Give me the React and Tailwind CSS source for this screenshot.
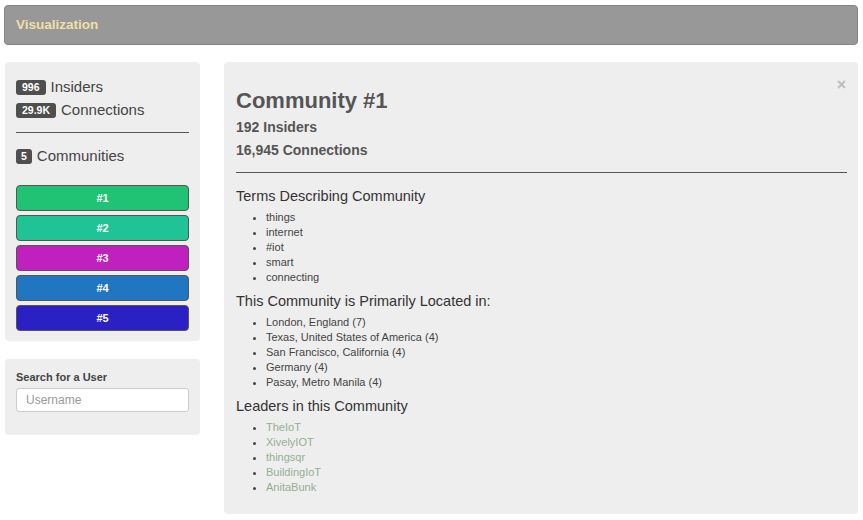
import React from "react";

const communities = [
  { label: "#1", color: "bg-[#20c374]" },
  { label: "#2", color: "bg-[#20c396]" },
  { label: "#3", color: "bg-[#c020be]" },
  { label: "#4", color: "bg-[#2176c2]" },
  { label: "#5", color: "bg-[#2a20c3]" },
];

const terms = ["things", "internet", "#iot", "smart", "connecting"];
const places = [
  "London, England (7)",
  "Texas, United States of America (4)",
  "San Francisco, California (4)",
  "Germany (4)",
  "Pasay, Metro Manila (4)",
];
const leaders = ["TheIoT", "XivelyIOT", "thingsqr", "BuildingIoT", "AnitaBunk"];

const Badge = ({ children, className = "" }) => (
  <span
    className={`inline-flex items-center h-[15px] rounded-[3px] bg-[#4f4f4f] text-white text-[10.5px] font-bold leading-none ${className}`}
  >
    {children}
  </span>
);

const App = () => {
  return (
    <div className="w-[863px] h-[520px] overflow-hidden bg-white font-['Liberation_Sans',Arial,sans-serif] text-[#555]">
      {/* Navbar */}
      <div className="ml-[4px] mt-[5px] w-[854px] h-[40px] flex items-center px-[11px] bg-[#989898] border border-[#858585] rounded-[4px]">
        <span className="text-[13.5px] font-bold text-[#f1dfa6]">Visualization</span>
      </div>

      <div className="flex ml-[5px] mt-[17px] gap-[24px]">
        {/* Sidebar */}
        <div className="w-[195px] flex flex-col gap-[18px]">
          <div className="bg-[#eeeeee] rounded-[4px] px-[11px] pt-[14px] pb-[10px]">
            <div className="flex items-center h-[23px] gap-[5px]">
              <Badge className="px-[6px]">996</Badge>
              <span className="text-[15px] text-[#444]">Insiders</span>
            </div>
            <div className="flex items-center h-[23px] gap-[5px]">
              <Badge className="px-[6px]">29.9K</Badge>
              <span className="text-[15px] text-[#444]">Connections</span>
            </div>
            <div className="mt-[10px] h-px bg-[#555]" />
            <div className="flex items-center h-[23px] gap-[5px] mt-[12px]">
              <Badge className="px-[5px]">5</Badge>
              <span className="text-[15px] text-[#444]">Communities</span>
            </div>
            <div className="mt-[17px] flex flex-col gap-[4px]">
              {communities.map((c) => (
                <button
                  key={c.label}
                  className={`h-[26px] w-full rounded-[4px] border border-[#555] ${c.color} text-white text-[11px] font-bold`}
                >
                  {c.label}
                </button>
              ))}
            </div>
          </div>

          <div className="bg-[#eeeeee] rounded-[4px] px-[11px] pt-[11px] pb-[23px]">
            <div className="text-[11px] leading-[15px] font-bold text-[#444] mb-[2px]">
              Search for a User
            </div>
            <input
              type="text"
              placeholder="Username"
              className="w-full h-[24px] bg-white border border-[#cccccc] rounded-[3px] px-[9px] text-[12px] placeholder:text-[#999] outline-none"
            />
          </div>
        </div>

        {/* Main panel */}
        <div className="relative w-[634px] h-[452px] bg-[#eeeeee] rounded-[4px] pl-[12px] pr-[11px] pt-[23px]">
          <span className="absolute right-[12px] top-[11px] text-[16px] font-bold text-[#bdbdbd]">×</span>
          <h1 className="text-[22px] leading-[31px] font-bold text-[#555]">Community #1</h1>
          <div className="text-[14px] leading-[23px] font-bold text-[#555]">192 Insiders</div>
          <div className="text-[14px] leading-[23px] font-bold text-[#555]">16,945 Connections</div>
          <div className="mt-[10px] h-px bg-[#555]" />

          <h3 className="mt-[13px] text-[14.5px] leading-[20px] text-[#333]">Terms Describing Community</h3>
          <ul className="list-disc pl-[30px] mt-[4px] text-[11px] leading-[15px] text-[#444]">
            {terms.map((t) => (
              <li key={t}>{t}</li>
            ))}
          </ul>

          <h3 className="mt-[6px] text-[14.5px] leading-[20px] text-[#333]">
            This Community is Primarily Located in:
          </h3>
          <ul className="list-disc pl-[30px] mt-[4px] text-[11px] leading-[15px] text-[#444]">
            {places.map((p) => (
              <li key={p}>{p}</li>
            ))}
          </ul>

          <h3 className="mt-[6px] text-[14.5px] leading-[20px] text-[#333]">Leaders in this Community</h3>
          <ul className="list-disc pl-[30px] mt-[4px] text-[11px] leading-[15px] text-[#444]">
            {leaders.map((l) => (
              <li key={l}>
                <a href="#" className="text-[#94ae94]">
                  {l}
                </a>
              </li>
            ))}
          </ul>
        </div>
      </div>
    </div>
  );
};

export default App;
